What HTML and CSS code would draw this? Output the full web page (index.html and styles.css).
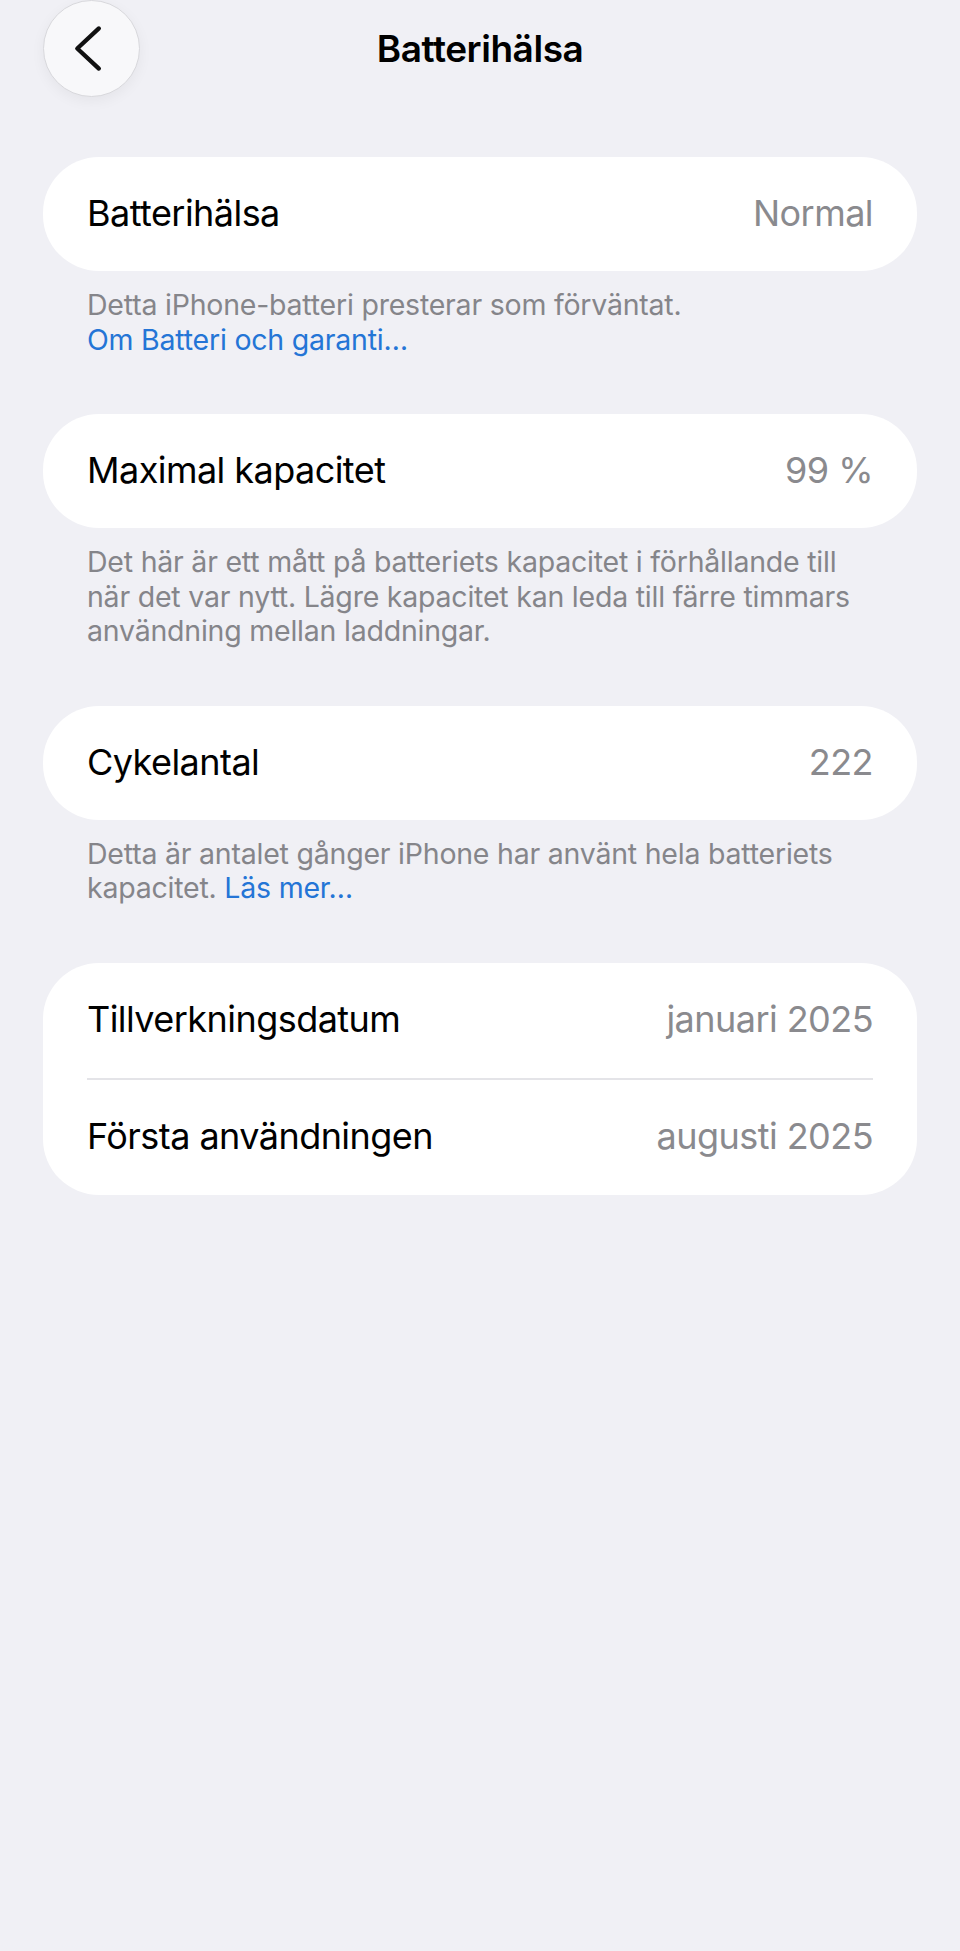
FILE: index.html
```html
<!DOCTYPE html>
<html lang="sv">
<head>
  <meta charset="UTF-8">
  <title>Batterihälsa</title>
  <link rel="stylesheet" href="styles.css">
</head>
<body>

  <div class="topp">
    <button class="tillbaka" aria-label="Tillbaka">
      <svg width="97" height="97" viewBox="0 0 97 97">
        <path d="M56 28 L34 48.5 L56 69" fill="none" stroke="#111" stroke-width="4.4" stroke-linecap="round" stroke-linejoin="round"/>
      </svg>
    </button>
    <h1>Batterihälsa</h1>
    <span></span>
  </div>

  <div class="sektion">
    <div class="kort">
      <div class="rad">
        <span class="etikett">Batterihälsa</span>
        <span class="varde">Normal</span>
      </div>
    </div>
    <p class="fot">Detta iPhone-batteri presterar som förväntat.<br><a href="#">Om Batteri och garanti…</a></p>
  </div>

  <div class="sektion">
    <div class="kort">
      <div class="rad">
        <span class="etikett">Maximal kapacitet</span>
        <span class="varde">99 %</span>
      </div>
    </div>
    <p class="fot">Det här är ett mått på batteriets kapacitet i förhållande till när det var nytt. Lägre kapacitet kan leda till färre timmars användning mellan laddningar.</p>
  </div>

  <div class="sektion">
    <div class="kort">
      <div class="rad">
        <span class="etikett">Cykelantal</span>
        <span class="varde">222</span>
      </div>
    </div>
    <p class="fot">Detta är antalet gånger iPhone har använt hela batteriets kapacitet. <a href="#">Läs mer…</a></p>
  </div>

  <div class="sektion">
    <div class="kort lista">
      <div class="rad">
        <span class="etikett">Tillverkningsdatum</span>
        <span class="varde">januari 2025</span>
      </div>
      <div class="rad">
        <span class="etikett">Första användningen</span>
        <span class="varde">augusti 2025</span>
      </div>
    </div>
  </div>

</body>
</html>
```

FILE: styles.css
```css
body {
  font-family: Inter, "Noto Sans", sans-serif;
  background-color: #f0f0f5;
  color: #000;
  margin: 0;
  padding: 0 43px;
  min-height: 1951px;
  box-sizing: border-box;
}
.topp {
  display: grid;
  grid-template-columns: 97px 1fr 97px;
  align-items: center;
  height: 97px;
  margin-bottom: 60px;
}
.topp h1 {
  margin: 0;
  text-align: center;
  font-size: 37px;
  font-weight: 600;
  letter-spacing: -0.45px;
}
.tillbaka {
  width: 97px;
  height: 97px;
  padding: 0;
  border: 1px solid #d8d8dc;
  border-radius: 50%;
  background-color: #f8f8fa;
  box-shadow: 0 4px 14px rgba(0,0,0,0.05);
  display: flex;
  align-items: center;
  justify-content: center;
}
.tillbaka svg {
  display: block;
}
.sektion {
  margin-bottom: 57px;
}
.kort {
  background-color: #fff;
  border-radius: 56px;
  padding: 0 44px;
}
.rad {
  display: flex;
  justify-content: space-between;
  align-items: center;
  height: 114px;
  font-size: 36px;
  line-height: 1.2;
  letter-spacing: -0.55px;
}
.lista .rad {
  height: 115px;
}
.rad + .rad {
  border-top: 2px solid #e4e4e8;
}
.varde {
  color: #8a8a8e;
}
.fot {
  margin: 17px 0 0;
  padding: 0 44px;
  font-size: 28.5px;
  line-height: 34.5px;
  color: #85858a;
  letter-spacing: -0.22px;
}
.fot a {
  color: #2475d6;
  text-decoration: none;
}
```
